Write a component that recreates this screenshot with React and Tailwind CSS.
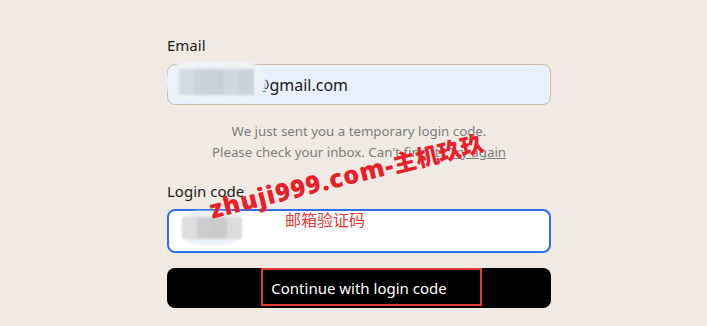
import React from 'react';

const font = { fontFamily: '"Noto Sans", "Noto Sans CJK SC", sans-serif' };

function BlurPatch({ className, cells }) {
  return (
    <div className={`absolute rounded-full bg-[#eef1f8] blur-[1px] ${className}`}>
      <div className="flex h-full items-center justify-center">
        {cells.map((c, i) => (
          <span key={i} className={`h-[65%] w-[15px] ${c}`} />
        ))}
      </div>
    </div>
  );
}

export default function App() {
  return (
    <div className="relative h-[326px] w-[707px] overflow-hidden bg-[#efebe4] text-[#1a1a1a]" style={font}>
      <div className="ml-[167px] flex w-[384px] flex-col pt-[34px]">
        <label className="text-[15px] leading-[22px]">Email</label>
        <div className="relative mt-[8px] flex h-[41px] items-center rounded-[8px] border border-[#c9bca8] bg-[#e8f0fe] pl-[87px] text-[16px]">
          @gmail.com
          <BlurPatch
            className="left-[-2px] top-[-3px] h-[40px] w-[100px]"
            cells={['bg-[#d5d9e3]', 'bg-[#cdd1dc]', 'bg-[#cbcfda]', 'bg-[#d3d7e1]', 'bg-[#cdd1dc]']}
          />
        </div>

        <p className="mt-[16px] text-center text-[13.3px] leading-[21px] text-[#7b7b7b]">
          We just sent you a temporary login code.
          <br />
          Please check your inbox. Can't find it? <span className="underline">Try again</span>
        </p>

        <label className="mt-[17px] text-[15px] leading-[22px]">Login code</label>
        <div className="relative mt-[7px] h-[44px] rounded-[8px] border-2 border-[#2f6fe8] bg-white">
          <BlurPatch
            className="left-[12px] top-[0px] h-[34px] w-[62px]"
            cells={['bg-[#dedede]', 'bg-[#cdcdcd]', 'bg-[#cbcbcb]', 'bg-[#dcdcdc]']}
          />
        </div>

        <button
          type="button"
          className="mt-[15px] flex h-[40px] w-full items-center justify-center rounded-[8px] bg-black text-[15px] text-white"
        >
          Continue with login code
        </button>
        <div className="mt-[12px] text-center text-[15px] font-semibold leading-[20px]">Or</div>
      </div>

      {/* annotations over the screenshot */}
      <div className="absolute left-[261px] top-[268px] h-[38px] w-[221px] border-2 border-[#e53935]" />
      <div
        className="absolute left-[285px] top-[207px] text-[16px] text-[#e53935]"
        style={{ fontFamily: '"Noto Sans CJK SC", sans-serif' }}
      >
        邮箱验证码
      </div>
      <div
        className="absolute left-[210px] top-[197px] origin-left -rotate-[14deg] whitespace-nowrap text-[25px] font-black leading-none text-[#e8202a]"
        style={{ fontFamily: '"Noto Sans", "Noto Sans CJK SC", sans-serif' }}
      >
        <span className="tracking-[1px]">zhuji999.com-</span>
        <span className="text-[23px]">主机玖玖</span>
      </div>
    </div>
  );
}
